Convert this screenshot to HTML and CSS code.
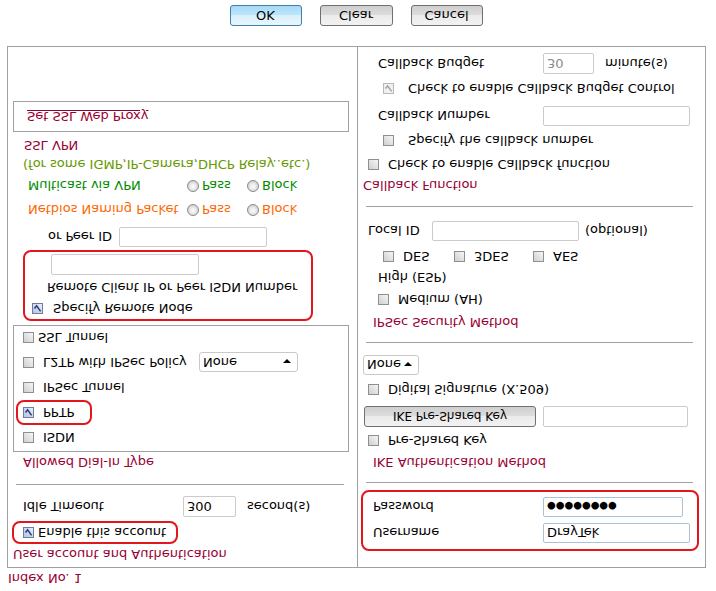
FILE: index.html
```html
<!DOCTYPE html>
<html>
<head>
<meta charset="utf-8">
<link rel="stylesheet" href="styles.css">
</head>
<body>
<div class="page">
  <div class="index">Index No. 1</div>
  <div class="main">
    <div class="col left">
      <div class="title tl-user">User account and Authentication</div>
      <div class="redbox rb-enable">
        <span class="cb on"><svg viewBox="0 0 9 9" width="9" height="9"><path d="M1.5 4.5 L3.6 7.2 L7.6 1.6" fill="none" stroke="#27448a" stroke-width="1.6"/></svg></span>
        <span class="cbt4">Enable this account</span>
      </div>
      <div class="row r-idle">
        <span class="lab-idle">Idle Timeout</span>
        <span class="field f-idle">300</span>
        <span class="unit">second(s)</span>
      </div>
      <div class="sep sep-l"></div>
      <div class="title tl-dial">Allowed Dial-In Type</div>
      <div class="box dialin">
        <div class="drow"><span class="cb"></span><span class="cbt9">ISDN</span></div>
        <div class="drow drow-pptp">
          <div class="redbox rb-pptp"><span class="cb on"><svg viewBox="0 0 9 9" width="9" height="9"><path d="M1.5 4.5 L3.6 7.2 L7.6 1.6" fill="none" stroke="#27448a" stroke-width="1.6"/></svg></span><span class="cbt9">PPTP</span></div>
        </div>
        <div class="drow"><span class="cb"></span><span class="cbt9">IPSec Tunnel</span></div>
        <div class="drow"><span class="cb"></span><span class="cbt9 lab-l2tp">L2TP with IPSec Policy</span><span class="select sel-l2tp">None<span class="arrow"></span></span></div>
        <div class="drow"><span class="cb"></span><span class="cbt4">SSL Tunnel</span></div>
      </div>
      <div class="redbox rb-remote">
        <div class="row rr1"><span class="cb on"><svg viewBox="0 0 9 9" width="9" height="9"><path d="M1.5 4.5 L3.6 7.2 L7.6 1.6" fill="none" stroke="#27448a" stroke-width="1.6"/></svg></span><span class="cbt10">Specify Remote Node</span></div>
        <div class="row rr2">Remote Client IP or Peer ISDN Number</div>
        <div class="field f-remote"></div>
      </div>
      <div class="row r-peer"><span class="lab-peer">or Peer ID</span><span class="field f-peer"></span></div>
      <div class="row r-netbios orange"><span class="lab-radio">Netbios Naming Packet</span><span class="ropt"><span class="radio"></span><span class="rt">Pass</span></span><span class="ropt"><span class="radio"></span><span class="rt">Block</span></span></div>
      <div class="row r-multi green"><span class="lab-radio">Multicast via VPN</span><span class="ropt"><span class="radio"></span><span class="rt">Pass</span></span><span class="ropt"><span class="radio"></span><span class="rt">Block</span></span></div>
      <div class="row r-some olive">(for some IGMP,IP-Camera,DHCP Relay..etc.)</div>
      <div class="title tl-ssl">SSL VPN</div>
      <div class="box proxy"><span class="link">Set SSL Web Proxy</span></div>
    </div>
    <div class="col right">
      <div class="redbox rb-login">
        <div class="row lrow"><span class="lab-login">Username</span><span class="field blue f-user">DrayTek</span></div>
        <div class="row lrow"><span class="lab-login">Password</span><span class="field blue f-pass">●●●●●●●●</span></div>
      </div>
      <div class="sep sep-r sr1"></div>
      <div class="title tr-ike">IKE Authentication Method</div>
      <div class="row r-psk"><span class="cb"></span><span class="cbt9">Pre-Shared Key</span></div>
      <div class="row r-ikebtn"><span class="btn ikebtn">IKE Pre-Shared Key</span><span class="field f-ike"></span></div>
      <div class="row r-dsig"><span class="cb"></span><span class="cbt9">Digital Signature (X.509)</span></div>
      <div class="row r-sel"><span class="select sel-none">None<span class="arrow"></span></span></div>
      <div class="sep sep-r sr2"></div>
      <div class="title tr-ipsec">IPSec Security Method</div>
      <div class="row r-med"><span class="cb"></span><span class="cbt9">Medium (AH)</span></div>
      <div class="row r-high">High (ESP)</div>
      <div class="row r-enc">
        <span class="eopt e-des"><span class="cb"></span><span class="cbt9">DES</span></span>
        <span class="eopt e-3des"><span class="cb"></span><span class="cbt9">3DES</span></span>
        <span class="eopt"><span class="cb"></span><span class="cbt9">AES</span></span>
      </div>
      <div class="row r-local"><span class="lab-local">Local ID</span><span class="field f-local"></span><span class="opt">(optional)</span></div>
      <div class="sep sep-r sr3"></div>
      <div class="title tr-cb">Callback Function</div>
      <div class="row r-cbf"><span class="cb"></span><span class="cbt9">Check to enable Callback function</span></div>
      <div class="row r-scn"><span class="cb"></span><span class="cbt14">Specify the callback number</span></div>
      <div class="row r-cbn"><span class="lab-cb">Callback Number</span><span class="field f-cbn"></span></div>
      <div class="row r-cbc"><span class="cb dis"><svg viewBox="0 0 9 9" width="9" height="9"><path d="M1.5 4.5 L3.6 7.2 L7.6 1.6" fill="none" stroke="#a0a0a0" stroke-width="1.4"/></svg></span><span class="cbt14">Check to enable Callback Budget Control</span></div>
      <div class="row r-budget"><span class="lab-cb">Callback Budget</span><span class="field f-budget">30</span><span class="unit">minute(s)</span></div>
    </div>
  </div>
  <div class="buttons">
    <span class="btn bbtn ok">OK</span>
    <span class="btn bbtn clear">Clear</span>
    <span class="btn bbtn">Cancel</span>
  </div>
</div>
</body>
</html>
```
FILE: styles.css
```css
body { margin: 0; background: #fff; }
.page {
  width: 716px; height: 591px; overflow: hidden;
  transform: scaleY(-1);
  font-family: "DejaVu Sans", Verdana, sans-serif;
  font-size: 13px; color: #000; background: #fff;
}
.index { height: 23px; box-sizing: border-box; padding: 4px 0 0 8px; line-height: 18px; color: #990033; }
.main {
  margin-left: 7px; width: 699px; height: 522px; box-sizing: border-box;
  border: 1px solid #a0a0a0;
  display: grid; grid-template-columns: 350px 347px;
}
.col { display: flex; flex-direction: column; }
.left { border-right: 1px solid #a0a0a0; }
.row { display: flex; align-items: center; height: 20px; flex: none; white-space: nowrap; }
.title { color: #990033; height: 20px; display: flex; align-items: center; flex: none; white-space: nowrap; }
.redbox { border: 2px solid #e3161e; border-radius: 8px; box-sizing: border-box; flex: none; }
.box { border: 1px solid #a0a0a0; box-sizing: border-box; flex: none; }
.sep { height: 1px; background: #a0a0a0; flex: none; }
.field {
  box-sizing: border-box; border: 1px solid #cbcbcb; border-radius: 2px; background: #fff;
  display: flex; align-items: center; padding-left: 3px; flex: none; height: 20px;
}
.field.blue { border-color: #abc1d8; }
.cb {
  width: 11px; height: 11px; box-sizing: border-box; flex: none;
  border: 1px solid #8e8f8f;
  background: linear-gradient(135deg, #cfcfcf, #f6f6f6);
  display: flex; align-items: center; justify-content: center;
}
.cb.on { background: linear-gradient(135deg, #b7c4e2, #e9eef9); border-color: #6f7d99; }
.cb.dis { background: #f0f0f0; border-color: #b8b8b8; }
.cb svg { display: block; }
.cbt4 { margin-left: 4px; }
.cbt9 { margin-left: 9px; }
.cbt10 { margin-left: 10px; }
.cbt14 { margin-left: 14px; }
.radio {
  width: 12px; height: 12px; box-sizing: border-box; border-radius: 50%; flex: none;
  border: 1px solid #8a8a8a;
  background: radial-gradient(circle at 50% 45%, #ffffff 0, #e6e6e6 45%, #bdbdbd 100%);
}
.ropt { display: flex; align-items: center; width: 60px; }
.rt { margin-left: 3px; }
.select {
  box-sizing: border-box; height: 20px; border: 1px solid #c9c9c9; border-radius: 3px; background: #fff;
  display: flex; align-items: center; padding-left: 3px; position: relative; flex: none;
}
.arrow {
  position: absolute; right: 6px; top: 8px;
  width: 0; height: 0; border-left: 4px solid transparent; border-right: 4px solid transparent; border-top: 4px solid #000;
}
.btn {
  box-sizing: border-box; display: flex; align-items: center; justify-content: center; flex: none;
  border: 1px solid #707070; border-radius: 3px;
  background: linear-gradient(#f2f2f2 0, #ebebeb 50%, #dddddd 51%, #cfcfcf 100%);
  font-size: 12px; color: #000;
}
.orange { color: #ff6600; }
.green { color: #008a00; }
.olive { color: #669900; }
.unit { margin-left: 11px; }

/* left column */
.tl-user { margin-top: 1px; height: 22px; padding-left: 5px; }
.rb-enable { margin-left: 4px; width: 166px; height: 23px; padding-left: 9px; display: flex; align-items: center; }
.r-idle { margin-top: 2px; height: 24px; padding-left: 15px; }
.lab-idle { width: 160px; }
.f-idle { width: 53px; height: 21px; }
.sep-l { margin-top: 10px; margin-left: 8px; width: 328px; }
.tl-dial { margin-top: 11px; padding-left: 15px; }
.dialin { margin-top: 1px; margin-left: 5px; width: 336px; height: 127px; padding-top: 1px; }
.drow { display: flex; align-items: center; height: 25px; padding-left: 9px; white-space: nowrap; }
.drow-pptp { padding-left: 2px; }
.rb-pptp { width: 76px; height: 25px; padding-left: 5px; display: flex; align-items: center; }
.lab-l2tp { width: 156px; }
.sel-l2tp { width: 99px; }
.rb-remote { margin-top: 4px; margin-left: 15px; width: 290px; height: 71px; }
.rr1 { padding-left: 7px; }
.rr2 { margin-top: 1px; padding-left: 22px; }
.f-remote { margin-top: 3px; margin-left: 26px; width: 148px; height: 21px; }
.r-peer { margin-top: 3px; padding-left: 40px; }
.lab-peer { width: 71px; }
.f-peer { width: 148px; }
.r-netbios { margin-top: 7px; padding-left: 20px; }
.lab-radio { width: 159px; }
.r-multi { margin-top: 4px; padding-left: 20px; }
.r-some { margin-top: 1px; padding-left: 15px; }
.tl-ssl { height: 18px; padding-left: 16px; }
.proxy { margin-top: 5px; margin-left: 5px; width: 336px; height: 31px; padding-left: 13px; display: flex; align-items: center; }
.link { color: #990033; text-decoration: underline; }

/* right column */
.rb-login { margin-top: 16px; margin-left: 3px; width: 338px; height: 61px; padding-top: 3px; }
.lrow { height: 26px; padding-left: 10px; }
.lab-login { width: 170px; }
.f-user { width: 147px; }
.f-pass { width: 140px; font-size: 10px; letter-spacing: 0; padding-left: 3px; }
.sep-r { margin-left: 8px; width: 327px; }
.sr1 { margin-top: 7px; }
.tr-ike { margin-top: 9px; padding-left: 15px; }
.r-psk { margin-top: 2px; padding-left: 10px; }
.r-ikebtn { margin-top: 4px; height: 21px; padding-left: 6px; }
.ikebtn { width: 172px; height: 21px; }
.f-ike { margin-left: 7px; width: 145px; height: 21px; }
.r-dsig { margin-top: 6px; padding-left: 10px; }
.r-sel { margin-top: 5px; padding-left: 5px; }
.sel-none { width: 56px; }
.sr2 { margin-top: 12px; }
.tr-ipsec { margin-top: 9px; padding-left: 15px; }
.r-med { margin-top: 3px; padding-left: 20px; }
.r-high { margin-top: 2px; padding-left: 20px; }
.r-enc { margin-top: 1px; padding-left: 25px; }
.eopt { display: flex; align-items: center; }
.e-des { width: 71px; }
.e-3des { width: 79px; }
.r-local { margin-top: 6px; padding-left: 10px; }
.lab-local { width: 64px; }
.f-local { width: 147px; }
.opt { margin-left: 6px; }
.sr3 { margin-top: 14px; }
.tr-cb { margin-top: 10px; padding-left: 5px; }
.r-cbf { margin-top: 1px; padding-left: 10px; }
.r-scn { margin-top: 4px; padding-left: 25px; }
.r-cbn { margin-top: 5px; padding-left: 20px; }
.lab-cb { width: 165px; }
.f-cbn { width: 147px; }
.r-cbc { margin-top: 7px; padding-left: 25px; }
.r-budget { margin-top: 5px; height: 21px; padding-left: 20px; }
.f-budget { width: 51px; height: 21px; color: #8a8a8a; }

/* buttons */
.buttons { margin-top: 20px; display: flex; justify-content: center; gap: 18px; padding-right: 4px; }
.bbtn { width: 72px; height: 21px; font-size: 13px; }
.clear { width: 73px; }
.ok { border-color: #3c7fb1; background: linear-gradient(#eaf6fd 0, #d9f0fc 50%, #bee6fd 51%, #a7d9f5 100%); }
```
